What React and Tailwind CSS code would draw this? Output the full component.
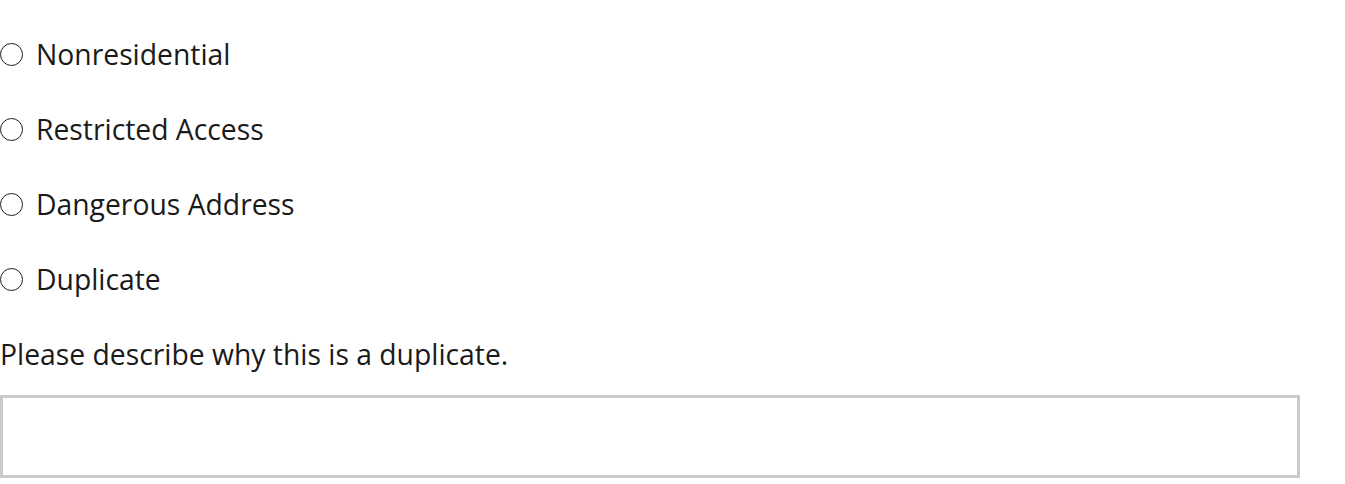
import React, { useState } from 'react';

const options = ['Nonresidential', 'Restricted Access', 'Dangerous Address', 'Duplicate'];

const Radio = ({ label, checked, onSelect }) => (
    <label className="flex items-center gap-[13px] h-[42px] cursor-pointer" onClick={onSelect}>
        <span className="w-[23px] h-[23px] rounded-full border-[1.5px] border-[#1f1f1f] flex items-center justify-center shrink-0">
            {checked && <span className="w-[12px] h-[12px] rounded-full bg-[#1f1f1f]" />}
        </span>
        <span>{label}</span>
    </label>
);

const App = () => {
    const [choice, setChoice] = useState(null);
    const [reason, setReason] = useState('');

    return (
        <div className="bg-white min-h-[484px] text-[28.3px] leading-[42px] text-[#1a1a1a] font-['Open_Sans',sans-serif] pt-[33px]">
            <div className="flex flex-col gap-[33px]">
                {options.map((o) => (
                    <Radio key={o} label={o} checked={choice === o} onSelect={() => setChoice(o)} />
                ))}
            </div>

            <div className="mt-[33px]">Please describe why this is a duplicate.</div>
            <textarea
                value={reason}
                onChange={(e) => setReason(e.target.value)}
                className="block mt-[20px] w-[1300px] h-[83px] border-[3px] border-[#cacaca] outline-none resize-none px-2"
            />
        </div>
    );
};

export default App;
